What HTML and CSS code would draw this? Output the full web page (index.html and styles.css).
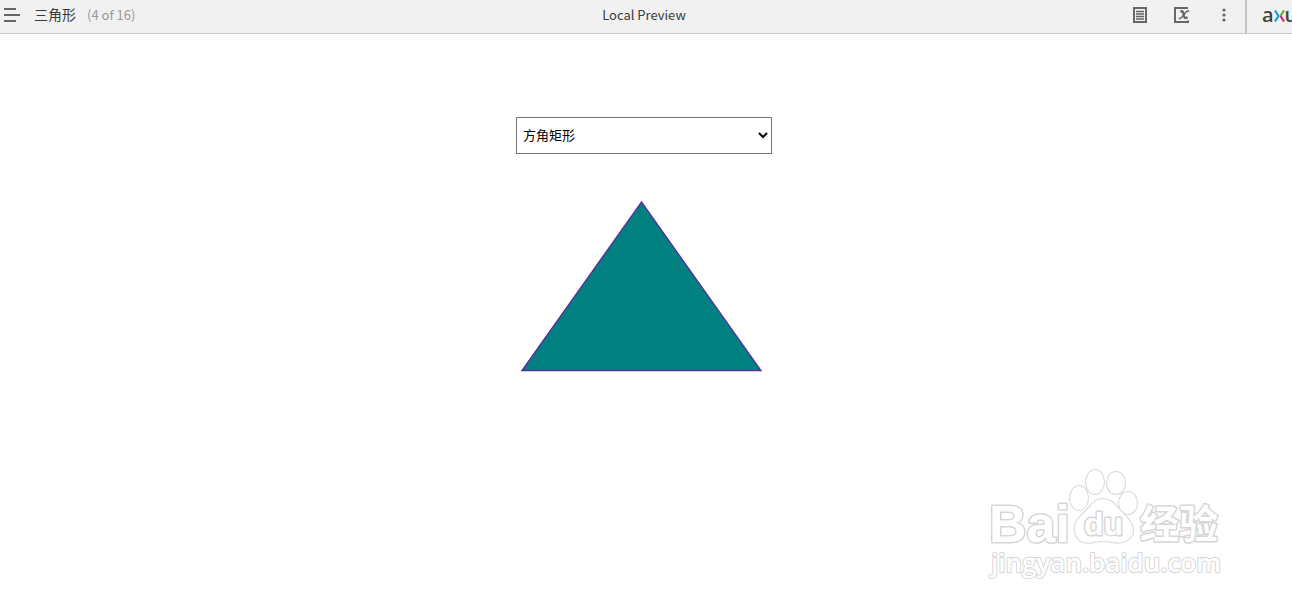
FILE: index.html
```html
<!DOCTYPE html>
<html lang="zh-CN">
<head>
<meta charset="utf-8">
<title>三角形</title>
<link rel="stylesheet" href="styles.css">
</head>
<body>
<header class="topbar">
  <div class="topbar-left">
    <button class="icon-button" type="button" aria-label="Pages">
      <svg width="16" height="14" viewBox="0 0 16 14" stroke="#666" stroke-width="2"><path d="M0 1H12M0 7H16M0 13H12"/></svg>
    </button>
    <span class="page-name">三角形</span>
    <span class="page-count">(4 of 16)</span>
  </div>
  <div class="preview-name">Local Preview</div>
  <div class="topbar-right">
    <div class="tools">
      <button class="icon-button" type="button" aria-label="Notes">
        <svg width="14" height="16" viewBox="0 0 14 16" fill="none" stroke="#666"><rect x="1" y="1" width="12" height="14" stroke-width="2"/><path d="M3 4.500H11M3 7H11M3 9.500H11M3 12H11" stroke-width="1.300"/></svg>
      </button>
      <button class="icon-button" type="button" aria-label="Variables">
        <svg width="16" height="16" viewBox="0 0 16 16" fill="none" stroke="#666"><path d="M14 1H1V15H14V13.500" stroke-width="2"/><path d="M6.500 4.800C8.500 3.200 9 4.500 9.600 7.500S11 12.500 13.500 10" stroke-width="2.200"/><path d="M15.300 4.200C12.500 2.800 10.500 6.500 9.300 8.500S7 12.500 4.800 11.200" stroke-width="1.500"/></svg>
      </button>
      <button class="icon-button more-button" type="button" aria-label="More">
        <svg width="4" height="14" viewBox="0 0 4 14" fill="#666"><circle cx="2" cy="2" r="1.600"/><circle cx="2" cy="7" r="1.600"/><circle cx="2" cy="12" r="1.600"/></svg>
      </button>
    </div>
    <a class="brand" href="#" aria-label="axure">
      <span>a</span>
      <svg width="11" height="12" viewBox="0 0 11 12" fill="none" stroke-width="2.200"><path d="M1 .500L4.500 6L1 11.500" stroke="#1c9fd9"/><path d="M10 .500L6.500 6" stroke="#5cb531"/><path d="M6.500 6L10 11.500" stroke="#d8246e"/></svg>
      <span>u</span>
    </a>
  </div>
</header>
<main class="stage">
  <div class="widgets">
    <select class="shape-select" aria-label="形状">
      <option>方角矩形</option>
      <option>三角形</option>
    </select>
    <svg class="triangle" viewBox="0 0 242 171"><path d="M120.500 1L240 169.500H1Z" fill="#008080" stroke="#5a2ca0" stroke-width="1.300"/></svg>
  </div>
</main>
<svg class="watermark" width="240" height="120" viewBox="0 0 240 120" role="img" aria-label="Baidu 经验 jingyan.baidu.com">
  <g class="mark-text">
    <text class="mark-latin" x="4" y="77">Bai</text>
    <g class="paw">
      <ellipse cx="110" cy="17" rx="9" ry="12"/>
      <ellipse cx="131" cy="18" rx="9" ry="11"/>
      <ellipse cx="94" cy="33" rx="9" ry="12"/>
      <ellipse cx="143" cy="38" rx="9" ry="11"/>
      <path d="M118 34C110 34 106 40 101 46C95 52 88 57 90 67C92 77 101 79 109 77Q118 75 127 77C137 79 146 76 148 67C149 58 141 52 136 46C130 40 126 34 118 34Z"/>
    </g>
    <text class="mark-du" x="99" y="70">du</text>
    <text class="mark-cjk" x="155" y="73">经验</text>
    <text class="mark-url" x="6" y="107">jingyan.baidu.com</text>
  </g>
</svg>
</body>
</html>
```
FILE: styles.css
```css
* { box-sizing: border-box; }
body {
  margin: 0;
  min-height: 100vh;
  position: relative;
  overflow-x: hidden;
  background: #fff;
  color: #373d3a;
  font: 13px/20px "Noto Sans CJK SC", sans-serif;
}
.topbar {
  display: grid;
  grid-template-columns: 1fr auto 1fr;
  height: 34px;
  background: #f1f1f1;
  border-bottom: 1px solid #c8c8c8;
}
.topbar-left, .topbar-right, .tools, .brand { display: flex; align-items: center; }
.topbar-left { padding: 0 0 3px 4px; }
.icon-button {
  display: flex;
  padding: 0;
  border: 0;
  background: none;
}
.page-name { margin-left: 14px; padding-bottom: 2px; font-size: 14px; }
.page-count { margin-left: 11px; color: #999; }
.preview-name { padding: 5px 4px 0 0; }
.topbar-right { justify-content: flex-end; }
.tools { gap: 27px; padding: 0 19px 3px 0; }
.more-button { margin-left: 5px; }
.brand {
  align-self: stretch;
  width: 47px;
  padding: 0 0 3px 15px;
  border-left: 2px solid #c2c2c2;
  overflow: hidden;
  color: #3f4442;
  font: 600 20px/20px "Open Sans", sans-serif;
  text-decoration: none;
}
.brand svg { flex: none; margin-top: 2px; }
.stage {
  display: flex;
  justify-content: center;
  padding: 83px 4px 0 0;
}
.widgets { display: flex; flex-direction: column; width: 256px; }
.shape-select {
  height: 37px;
  padding: 0 3px 2px 2px;
  border: 1px solid #767676;
  border-radius: 0;
  background: #fff;
  color: #000;
  font: 13px "Noto Sans CJK SC", sans-serif;
}
.triangle { width: 242px; margin: 47px 0 0 5px; }
.watermark { position: absolute; right: 67px; bottom: 23px; }
.mark-text { fill: #fff; stroke: #d6d6d6; stroke-width: 3px; stroke-linejoin: round; paint-order: stroke; }
.paw { stroke-width: 2px; }
.mark-latin { font: bold 52px "Liberation Sans", sans-serif; }
.mark-du { font: bold 32px "Liberation Sans", sans-serif; }
.mark-cjk { font: bold 39px "Noto Sans CJK SC", sans-serif; }
.mark-url { font: 600 26px "Open Sans", sans-serif; stroke-width: 2px; }
```
